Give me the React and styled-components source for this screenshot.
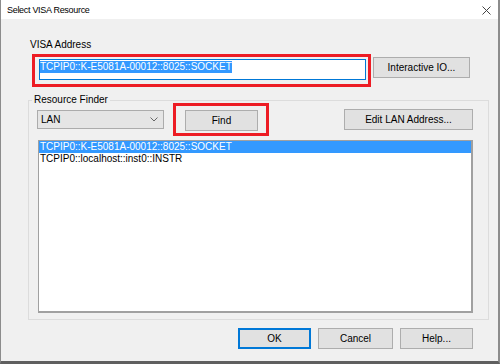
import styled, { createGlobalStyle } from "styled-components";

const GlobalStyle = createGlobalStyle`
  * { box-sizing: border-box; }
  html, body { margin: 0; padding: 0; background: #6e6e6e; }
  body { font-family: "Liberation Sans", Arial, sans-serif; font-size: 10px; color: #000; }
`;

const App = () => {
  return (
    <>
      <GlobalStyle />
      <Window>
        <TitleBar>
          <Title>Select VISA Resource</Title>
          <Close>
            <svg width="9" height="9" viewBox="0 0 9 9">
              <path d="M0.5 0.5 L8.5 8.5 M8.5 0.5 L0.5 8.5" stroke="#444" strokeWidth="1" fill="none" />
            </svg>
          </Close>
        </TitleBar>
        <Body>
          <AddressLabel>VISA Address</AddressLabel>
          <AddressRow>
            <Highlight $w={339} $pad="2px 2px 4px 4px">
              <AddressInput>
                <Selected>TCPIP0::K-E5081A-00012::8025::SOCKET</Selected>
              </AddressInput>
            </Highlight>
            <Button $w={97} $top={3} $left={2}>Interactive IO...</Button>
          </AddressRow>

          <GroupBox>
            <Legend>Resource Finder</Legend>
            <FinderRow>
              <Combo>
                <span>LAN</span>
                <svg width="8" height="5" viewBox="0 0 8 5">
                  <path d="M0.5 0.5 L4 4 L7.5 0.5" stroke="#666" strokeWidth="1" fill="none" />
                </svg>
              </Combo>
              <Highlight $w={96} $pad="1px 0 0 1px" $left={9} $center>
                <Button $w={73}>Find</Button>
              </Highlight>
              <Button $w={129} $auto>Edit LAN Address...</Button>
            </FinderRow>
            <ResourceList>
              <ListRow $selected>TCPIP0::K-E5081A-00012::8025::SOCKET</ListRow>
              <ListRow>TCPIP0::localhost::inst0::INSTR</ListRow>
            </ResourceList>
          </GroupBox>

          <Footer>
            <Button $w={73} $default>OK</Button>
            <Button $w={75}>Cancel</Button>
            <Button $w={73}>Help...</Button>
          </Footer>
        </Body>
      </Window>
    </>
  );
};

const Window = styled.div`
  width: 500px;
  height: 364px;
  display: flex;
  flex-direction: column;
  border-left: 1px solid #8c8c8c;
  border-right: 2px solid #8c8c8c;
  border-bottom: 3px solid #5f5f5f;
  background: #f0f0f0;
`;

const TitleBar = styled.div`
  height: 19px;
  background: #fff;
  display: flex;
  align-items: center;
  justify-content: space-between;
  padding: 0 7px 0 6px;
`;

const Title = styled.div`
  font-size: 9px;
  letter-spacing: -0.3px;
  color: #000;
`;

const Close = styled.div`
  display: flex;
  align-items: center;
  padding-top: 1px;
`;

const Body = styled.div`
  flex: 1;
  display: flex;
  flex-direction: column;
`;

const AddressLabel = styled.div`
  margin: 20px 0 0 29px;
  line-height: 12px;
`;

const AddressRow = styled.div`
  display: flex;
  align-items: flex-start;
  margin: 3px 0 0 31px;
`;

const Highlight = styled.div`
  width: ${(p) => p.$w}px;
  height: 33px;
  border: 3px solid #ed1c24;
  padding: ${(p) => p.$pad};
  margin-left: ${(p) => p.$left || 0}px;
  display: flex;
  ${(p) => p.$center && "align-items: center; justify-content: center;"}
`;

const AddressInput = styled.div`
  flex: 1;
  height: 21px;
  background: #fff;
  border: 1px solid #0078d7;
  padding: 1px 0 0 0;
  display: flex;
  align-items: flex-start;
`;

const Selected = styled.span`
  background: #3399ff;
  color: #fff;
  line-height: 12px;
  white-space: nowrap;
`;

const Button = styled.div`
  width: ${(p) => p.$w}px;
  height: 21px;
  flex-shrink: 0;
  margin-top: ${(p) => p.$top || 0}px;
  margin-left: ${(p) => (p.$auto ? "auto" : `${p.$left || 0}px`)};
  background: #e1e1e1;
  border: ${(p) => (p.$default ? "2px solid #0078d7" : "1px solid #adadad")};
  display: flex;
  align-items: center;
  justify-content: center;
  white-space: nowrap;
  color: #000;
`;

const GroupBox = styled.div`
  position: relative;
  margin: 13px 0 0 27px;
  width: 461px;
  height: 220px;
  border: 1px solid #dcdcdc;
  padding: 2px 15px 6px 8px;
  display: flex;
  flex-direction: column;
`;

const Legend = styled.div`
  position: absolute;
  top: -7px;
  left: 3px;
  padding: 0 2px;
  background: #f0f0f0;
  line-height: 12px;
`;

const FinderRow = styled.div`
  display: flex;
  align-items: center;
  height: 33px;
`;

const Combo = styled.div`
  width: 127px;
  height: 19px;
  background: #e5e5e5;
  border: 1px solid #acacac;
  display: flex;
  align-items: center;
  justify-content: space-between;
  padding: 0 5px 0 3px;
`;

const ResourceList = styled.div`
  margin: 4px 0 0 1px;
  width: 435px;
  flex: 1;
  background: #fff;
  border: 1px solid #a0a0a0;
  border-right-width: 2px;
  border-bottom-width: 2px;
  display: flex;
  flex-direction: column;
`;

const ListRow = styled.div`
  height: 12px;
  line-height: 12px;
  padding-left: 1px;
  white-space: nowrap;
  background: ${(p) => (p.$selected ? "#3399ff" : "transparent")};
  color: ${(p) => (p.$selected ? "#fff" : "#000")};
`;

const Footer = styled.div`
  display: flex;
  justify-content: flex-end;
  gap: 7px;
  margin-top: 8px;
  padding-right: 25px;
`;

export default App;
